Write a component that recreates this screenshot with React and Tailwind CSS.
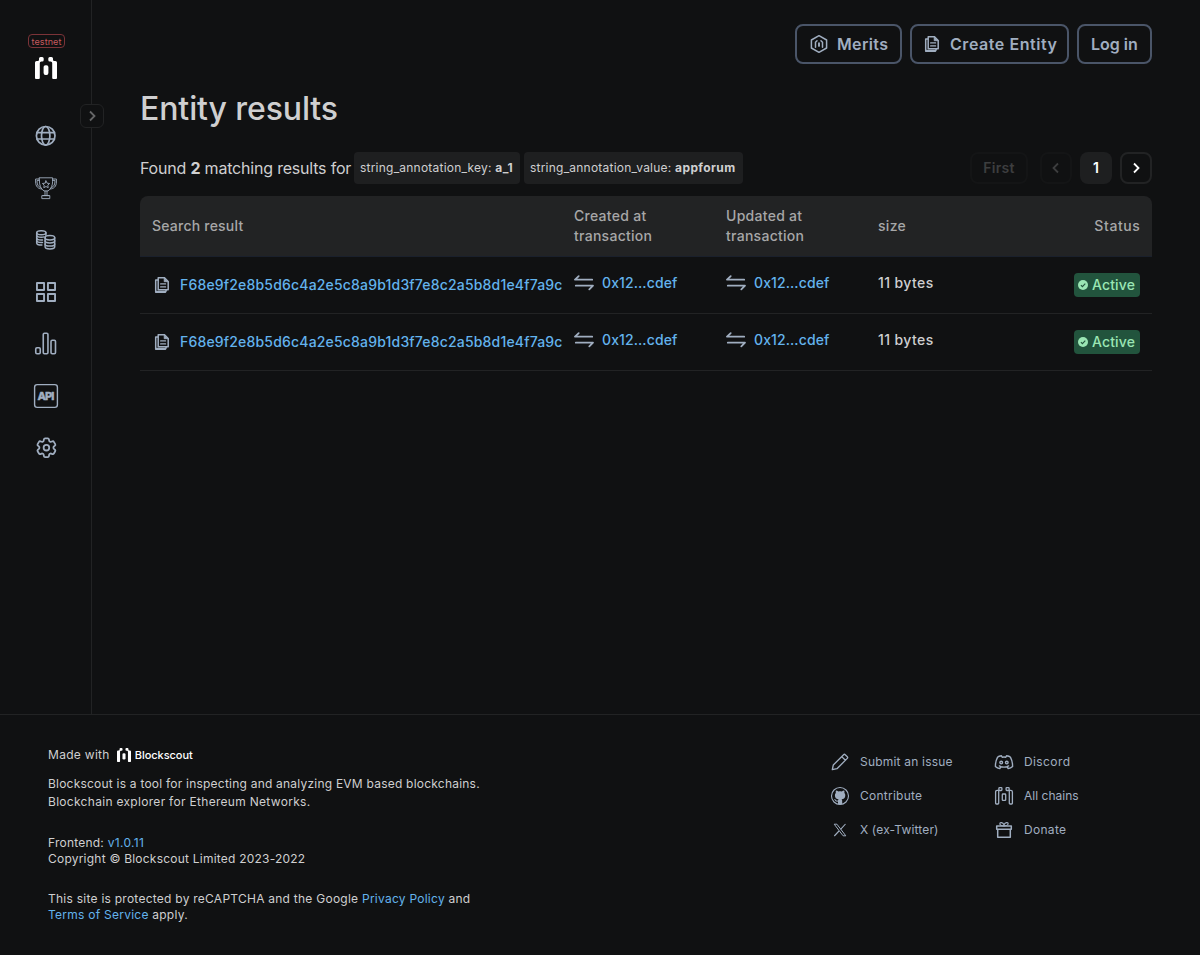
import React from "react";

const base = { fill: "none", stroke: "currentColor", strokeLinecap: "round", strokeLinejoin: "round" };

const Logo = ({ className }) => (
  <svg viewBox="0 0 22 22" className={className} fill="currentColor">
    <path d="M0 5.600q0-1.600 1.600-1.600H2.800Q4 4 4 2.800V1.500Q4 0 5.500 0H7.200q1.500 0 1.500 1.500v1.400q0 1.500-1.500 1.500H6.300q-1.500 0-1.500 1.500V21q0 1-1 1H1q-1 0-1-1z" />
    <path d="M22 5.600q0-1.600-1.600-1.600H19.200Q18 4 18 2.800V1.500Q18 0 16.500 0H14.800q-1.500 0-1.500 1.500v1.400q0 1.500 1.500 1.500H15.700q1.500 0 1.500 1.500V21q0 1 1 1H21q1 0 1-1z" />
    <rect x="8.600" y="8.200" width="4.800" height="9.800" rx="1.900" />
  </svg>
);

const Globe = () => (
  <svg viewBox="0 0 30 30" className="size-[30px]" {...base} strokeWidth="1.700">
    <circle cx="14.700" cy="14.800" r="9.300" />
    <ellipse cx="14.700" cy="14.800" rx="4.200" ry="9.300" />
    <path d="M6 11.700h17.400M6 18h17.400" />
  </svg>
);

const Trophy = () => (
  <svg viewBox="0 0 30 30" className="size-[30px]" {...base} strokeWidth="0.9">
    <path d="M8.400 4.800h13.200v3.400c0 4-1.300 7.500-4.600 9.800h-4C9.700 15.700 8.400 12.200 8.400 8.200z" />
    <path d="M8.400 6H4.600v3c0 4.200 2.400 6.900 6 7M21.600 6h3.800v3c0 4.200-2.400 6.900-6 7" />
    <path d="M8.400 7.400H6c0 4 .8 6 3.400 7.200M21.600 7.400H24c0 4-.8 6-3.400 7.200" />
    <path d="M14 18v4.600M16 18v4.600M12 22.600h6M11.200 22.600h7.600v3h-7.600z" />
    <path d="m15 7.900 1.100 2.300 2.500.3-1.800 1.700.4 2.500-2.200-1.200-2.200 1.200.4-2.500-1.800-1.700 2.500-.3z" />
  </svg>
);

const Coins = () => (
  <svg viewBox="0 0 30 30" className="size-[30px]" {...base} strokeWidth="1.500">
    <ellipse cx="10.300" cy="7.700" rx="4.600" ry="2" />
    <path d="M5.700 7.700v10.200c0 1.200 2 2.100 5.200 2.100M14.900 7.700v2.600" />
    <path d="M5.700 10.300c0 1.200 2.100 2 4.600 2 1.200 0 2.200-.1 3-.4M5.700 12.900c0 1.200 2.100 2 4.600 2h1.200M5.700 15.500c0 1.200 2.100 2 4.600 2h1.200" />
    <ellipse cx="18.900" cy="12.700" rx="4.800" ry="2.200" />
    <path d="M14.100 12.700v9c0 1.300 2.200 2.200 4.800 2.200s4.800-.9 4.800-2.200v-9" />
    <path d="M14.100 15.800c0 1.300 2.200 2.200 4.800 2.200s4.800-.9 4.800-2.200M14.100 18.900c0 1.300 2.200 2.200 4.800 2.200s4.800-.9 4.800-2.200" />
  </svg>
);

const Grid = () => (
  <svg viewBox="0 0 30 30" className="size-[30px]" fill="none" stroke="currentColor" strokeWidth="1.900" strokeLinejoin="round">
    <path d="M5.950 5.950h7.100v7.100h-7.100zM16.950 5.950h7.100v7.100h-7.100zM5.950 16.950h7.100v7.100h-7.100zM16.950 16.950h7.100v7.100h-7.100z" />
  </svg>
);

const Bars = () => (
  <svg viewBox="0 0 30 30" className="size-[30px]" {...base} strokeWidth="1.600">
    <rect x="4.750" y="18.800" width="4.500" height="5.900" rx="1.200" />
    <rect x="12.250" y="4.300" width="4.700" height="20.400" rx="1.200" />
    <rect x="20" y="11.300" width="4.500" height="13.400" rx="1.200" />
  </svg>
);

const Api = () => (
  <svg viewBox="0 0 30 30" className="size-[30px]">
    <rect x="3.600" y="3.600" width="22.800" height="22.800" rx="2.600" fill="none" stroke="currentColor" strokeWidth="1.400" />
    <text x="15" y="19" textAnchor="middle" fontSize="11" fontWeight="800" fill="currentColor" stroke="currentColor" strokeWidth=".4" strokeLinejoin="round" fontFamily="Inter, sans-serif" textLength="17" lengthAdjust="spacing">API</text>
  </svg>
);

const Gear = () => (
  <svg viewBox="-2.800 -2.100 28.800 28.800" className="size-[30px]" {...base} strokeWidth="1.700">
    <path d="M9.594 3.940c.090-.542.560-.940 1.110-.940h2.593c.550 0 1.020.398 1.110.940l.213 1.281c.063.374.313.686.645.870.074.040.147.083.220.127.325.196.720.257 1.075.124l1.217-.456a1.125 1.125 0 0 1 1.370.490l1.296 2.247a1.125 1.125 0 0 1-.260 1.431l-1.003.827c-.293.241-.438.613-.430.992a7.723 7.723 0 0 1 0 .255c-.008.378.137.750.430.991l1.004.827c.424.350.534.955.260 1.430l-1.298 2.247a1.125 1.125 0 0 1-1.369.491l-1.217-.456c-.355-.133-.750-.072-1.076.124a6.470 6.470 0 0 1-.220.128c-.331.183-.581.495-.644.869l-.213 1.281c-.090.543-.560.940-1.110.940h-2.594c-.550 0-1.019-.398-1.110-.940l-.213-1.281c-.062-.374-.312-.686-.644-.870a6.520 6.520 0 0 1-.220-.127c-.325-.196-.720-.257-1.076-.124l-1.217.456a1.125 1.125 0 0 1-1.369-.490l-1.297-2.247a1.125 1.125 0 0 1 .260-1.431l1.004-.827c.292-.240.437-.613.430-.991a6.932 6.932 0 0 1 0-.255c.007-.380-.138-.751-.430-.992l-1.004-.827a1.125 1.125 0 0 1-.260-1.430l1.297-2.247a1.125 1.125 0 0 1 1.370-.491l1.216.456c.356.133.751.072 1.076-.124.072-.044.146-.086.220-.128.332-.183.582-.495.644-.869z" />
    <circle cx="12" cy="12" r="2.700" />
  </svg>
);

const Merits = () => (
  <svg viewBox="0 0 20 20" className="size-5" {...base} strokeWidth="1.500">
    <path d="M10 1.700 17.600 6v8L10 18.300 2.400 14V6z" />
    <path d="M6.500 13.200V8.300l1.500-1.500M13.500 13.200V8.300L12 6.800" />
    <path d="M10 9.300v2.600" strokeWidth="1.900" />
  </svg>
);

const Doc = () => (
  <svg viewBox="0 0 20 20" className="size-5 shrink-0" {...base} strokeWidth="1.500">
    <path d="M6.200 2.800h6.300L16.200 6.500v8.200h-10z" />
    <path d="M12.200 3v3.700h3.800z" fill="currentColor" strokeWidth=".8" />
    <path d="M6 4.900H3.700v12.300h9.600l1-2.200" />
    <path d="M8.600 8.900h5M8.600 11.900h5" strokeWidth="1.200" />
    <path d="M4.500 16.600h9" strokeWidth="1.800" />
  </svg>
);

const Swap = () => (
  <svg viewBox="0 0 20 20" className="size-5 shrink-0" {...base} strokeWidth="1.800">
    <path d="M4.700 3.100 1 6.700h17.200" />
    <path d="M1.800 12.700H19l-3.700 3.600" />
  </svg>
);

const Chevron = ({ left, className }) => (
  <svg viewBox="0 0 12 12" className={className} fill="none" stroke="currentColor" strokeWidth="1.800">
    <path d={left ? "M8 1.500 3.500 6 8 10.500" : "M4 1.500 8.500 6 4 10.500"} />
  </svg>
);

const Pencil = () => (
  <svg viewBox="0 0 20 20" className="size-5" {...base} strokeWidth="1.300">
    <path d="M2.300 17.700 3.300 13 13.600 2.700q.8-.8 1.600 0l2.100 2.100q.8.800 0 1.600L7 16.700zM11.700 4.600l3.700 3.700" />
  </svg>
);
const Github = () => (
  <svg viewBox="0 0 20 20" className="size-5">
    <circle cx="10" cy="10" r="8.500" fill="none" stroke="currentColor" strokeWidth="1.100" />
    <path fill="currentColor" d="M8 18.200v-2.600c-1.700.3-2.700-.3-3.200-1.500-.2-.5-.5-.8-.9-1.100.9-.3 1.500.2 2 .9.500.8 1.200.9 2.100.6.100-.6.300-.9.600-1.200-2.300-.3-3.700-1.400-3.700-4.100 0-1 .3-1.700.9-2.300-.2-.8-.1-1.600.2-2.300.9 0 1.700.4 2.400.9 1.100-.3 2.300-.3 3.400 0 .7-.5 1.500-.9 2.400-.9.300.7.400 1.500.2 2.300.6.600.9 1.300.9 2.300 0 2.700-1.400 3.800-3.700 4.100.4.400.6.900.6 1.700v3.200z" />
  </svg>
);
const XIcon = () => (
  <svg viewBox="0 0 20 20" className="size-5" fill="none" stroke="currentColor">
    <path d="M4.200 4.200h2.700l8.900 11.600h-2.700z" strokeWidth="1" />
    <path d="m15.500 4-4.900 5.300M9 11l-4.700 5" strokeWidth="1.100" />
  </svg>
);
const Discord = () => (
  <svg viewBox="0 0 20 20" className="size-5" {...base} strokeWidth="1.400">
    <path d="M7.500 3.800C5.600 4 4.100 4.700 3.500 5.300 2 8 1.400 11 1.400 14.400c1.300 1.300 2.900 2 4.400 2.200l1.100-1.900c2 .5 4.200.5 6.200 0l1.100 1.900c1.500-.2 3.100-.9 4.400-2.200 0-3.400-.6-6.400-2.100-9.100-.6-.6-2.100-1.300-4-1.500l-.7 1.400c-1.200-.2-2.400-.2-3.600 0zM6.900 14.700l-1.500-.8M13.100 14.700l1.500-.8" />
    <circle cx="7.200" cy="10.600" r="1.300" />
    <circle cx="12.800" cy="10.600" r="1.300" />
  </svg>
);
const Chains = () => (
  <svg viewBox="0 0 20 20" className="size-5" {...base} strokeWidth="1.300">
    <path d="M4.700 4.400H3.200q-1.600 0-1.600 1.600v11.200q0 .8.800.8h1.500q.8 0 .8-.8zM15.300 4.400h1.500q1.600 0 1.600 1.600v11.200q0 .8-.8.800h-1.500q-.8 0-.8-.8z" />
    <rect x="4.900" y="1.600" width="3" height="2.900" rx=".7" />
    <rect x="12.100" y="1.600" width="3" height="2.900" rx=".7" />
    <rect x="8.300" y="8" width="3.400" height="6.400" rx=".7" />
  </svg>
);
const Gift = () => (
  <svg viewBox="0 0 20 20" className="size-5" {...base} strokeWidth="1.500">
    <path d="M2.700 6h14.600v3.300H2.700zM3.700 9.500v7.800h12.600V9.500" />
    <path d="M10 5.800C8.500 5.800 5.900 5.200 5.900 3.700c0-1.600 2.900-1.400 4.100 1.100 1.200-2.500 4.100-2.700 4.100-1.100 0 1.500-2.600 2.100-4.100 2.100z" strokeWidth="1.200" />
  </svg>
);
const Check = () => (
  <svg viewBox="0 0 10 10" className="size-[10px]">
    <circle cx="5" cy="5" r="5" fill="currentColor" />
    <path d="m2.900 5.200 1.500 1.500 2.900-3" fill="none" stroke="#22543d" strokeWidth="1.100" />
  </svg>
);

const nav = [Globe, Trophy, Coins, Grid, Bars, Api, Gear];

const HeaderButton = ({ icon, children, className }) => (
  <button className={`flex h-10 items-center rounded-lg border-2 border-[#4a5568] pl-3 font-semibold text-[#a0aec0] ${className}`}>
    {icon}
    <span className="whitespace-nowrap">{children}</span>
  </button>
);

const Tag = ({ label, value, className }) => (
  <div className={`flex h-8 items-center whitespace-pre rounded bg-[#1e1f20] pl-1.5 text-xs tracking-[0.22px] ${className}`}>
    {label}: <b className="font-bold tracking-[0.4px]">{value}</b>
  </div>
);

const Tx = () => (
  <div className="flex w-[152px] items-center gap-2 pb-1 pl-3 text-[#a0aec0]">
    <Swap />
    <a className="tracking-[0.1px] text-[#63b3ed]">0x12...cdef</a>
  </div>
);

const Row = () => (
  <div className="flex h-[57px] items-center border-b border-[#222324] text-sm font-medium">
    <div className="flex w-[422px] items-center gap-2 pl-3 text-[#a0aec0]">
      <Doc />
      <a className="min-w-0 flex-1 overflow-hidden whitespace-nowrap tracking-[0.18px] text-[#63b3ed]">F68e9f2e8b5d6c4a2e5c8a9b1d3f7e8c2a5b8d1e4f7a9c</a>
    </div>
    <Tx />
    <Tx />
    <div className="flex-1 pb-1 pl-3 tracking-[0.4px]">11 bytes</div>
    <div className="mr-3 flex h-6 w-[66px] items-center gap-1 rounded-sm bg-[#22543d] pl-1 tracking-[0.15px] text-[#9ae6b4]">
      <Check />
      Active
    </div>
  </div>
);

const FooterLink = ({ Icon, className, children }) => (
  <a className="flex h-5 items-center gap-2.5 text-xs text-[#a0aec0]">
    <Icon />
    <span className={`whitespace-nowrap ${className}`}>{children}</span>
  </a>
);

export default function App() {
  return (
    <div className="flex h-[955px] w-[1200px] flex-col bg-[#101112] font-['Inter',sans-serif] text-[#cfcfd0]">
      <div className="flex h-[714px]">
        <aside className="relative flex w-[92px] shrink-0 flex-col items-center border-r border-[#222324] pt-[34px]">
          <div className="ml-[2px] flex h-[14px] w-[37px] items-center justify-center rounded border border-[#7b3338] text-[9px] leading-none tracking-[0.1px] text-[#c75a5f]">testnet</div>
          <Logo className="ml-px mt-[9px] size-[22px] text-white" />
          <nav className="mt-[42px] flex flex-col gap-[22px] text-[#a0aec0]">
            {nav.map((Icon, i) => (
              <a key={i} className="flex size-[30px] items-center justify-center"><Icon /></a>
            ))}
          </nav>
          <button className="absolute top-[104px] -right-[13px] flex size-6 items-center justify-center rounded-md border border-[#222324] bg-[#101112] text-[#666768]">
            <Chevron className="size-3" />
          </button>
        </aside>
        <main className="flex flex-1 flex-col px-12 pt-6">
          <div className="flex justify-end gap-2">
            <HeaderButton icon={<Merits />} className="w-[107px] gap-2 tracking-[0.35px]">Merits</HeaderButton>
            <HeaderButton icon={<Doc />} className="w-[159px] gap-2 pl-[10px] tracking-[0.55px]">Create Entity</HeaderButton>
            <HeaderButton className="w-[75px]">Log in</HeaderButton>
          </div>
          <h1 className="mt-6 h-10 pt-px text-[32px] leading-10 font-medium tracking-[-0.1px]">Entity results</h1>
          <div className="mt-6 flex h-8 items-center">
            <p className="w-[214px] whitespace-nowrap tracking-[-0.2px]">Found <b className="font-bold">2</b> matching results for</p>
            <Tag label="string_annotation_key" value="a_1" className="w-[166px]" />
            <Tag label="string_annotation_value" value="appforum" className="ml-1 w-[219px]" />
            <div className="ml-auto flex items-center font-semibold">
              <span className="flex h-8 w-[58px] items-center justify-center rounded-lg border-2 border-[#141516] text-sm tracking-[0.3px] text-[#3d3e3f]">First</span>
              <span className="ml-3 flex size-8 items-center justify-center rounded-lg border-2 border-[#141516] text-[#3d3e3f]"><Chevron left className="size-3" /></span>
              <span className="ml-2 flex size-8 items-center justify-center rounded-lg bg-[#1e1f20] text-sm text-white">1</span>
              <span className="ml-2 flex size-8 items-center justify-center rounded-lg border-2 border-[#222324] text-white"><Chevron className="size-3" /></span>
            </div>
          </div>
          <div className="mt-3">
            <div className="flex h-[61px] items-center rounded-t-lg border-b border-[#1a202c] bg-[#222324] text-sm leading-5 font-medium tracking-[0.28px] text-[#a7a7a8]">
              <div className="w-[422px] pl-3 tracking-[0.22px]">Search result</div>
              <div className="w-[152px] pl-3">Created at<br />transaction</div>
              <div className="w-[152px] pl-3">Updated at<br />transaction</div>
              <div className="flex-1 pl-3">size</div>
              <div className="pr-[11.500px] tracking-[0.6px]">Status</div>
            </div>
            <Row />
            <Row />
          </div>
        </main>
      </div>
      <footer className="flex h-[241px] justify-between border-t border-[#222324] px-12 pt-[30px] text-xs tracking-[0.22px]">
        <div>
          <div className="flex h-5 items-center">
            <span className="tracking-[0.3px]">Made with</span>
            <Logo className="ml-[7px] size-[14px] text-white" />
            <span className="ml-1 text-[11px] font-medium tracking-[-0.05px] text-white">Blockscout</span>
          </div>
          <p className="mt-[10px] leading-[18px]">Blockscout is a tool for inspecting and analyzing EVM based blockchains.<br /><span className="tracking-[0.3px]">Blockchain explorer for Ethereum Networks.</span></p>
          <p className="mt-6 leading-4">Frontend: <a className="tracking-[0.35px] text-[#63b3ed]">v1.0.11</a><br />Copyright © Blockscout Limited 2023-2022</p>
          <p className="mt-6 leading-4 tracking-[0.25px]">This site is protected by reCAPTCHA and the Google <a className="text-[#63b3ed]">Privacy Policy</a> and<br /><a className="text-[#63b3ed]">Terms of Service</a> apply.</p>
        </div>
        <div className="grid h-fit w-[322px] grid-cols-[164px_1fr] gap-y-3.5 pt-[7px]">
          <FooterLink Icon={Pencil} className="tracking-[0.2px]">Submit an issue</FooterLink>
          <FooterLink Icon={Discord} className="tracking-[0.4px]">Discord</FooterLink>
          <FooterLink Icon={Github} className="tracking-[0.25px]">Contribute</FooterLink>
          <FooterLink Icon={Chains} className="tracking-[0.02px]">All chains</FooterLink>
          <FooterLink Icon={XIcon} className="tracking-[0.15px]">X (ex-Twitter)</FooterLink>
          <FooterLink Icon={Gift} className="tracking-[0.3px]">Donate</FooterLink>
        </div>
      </footer>
    </div>
  );
}
